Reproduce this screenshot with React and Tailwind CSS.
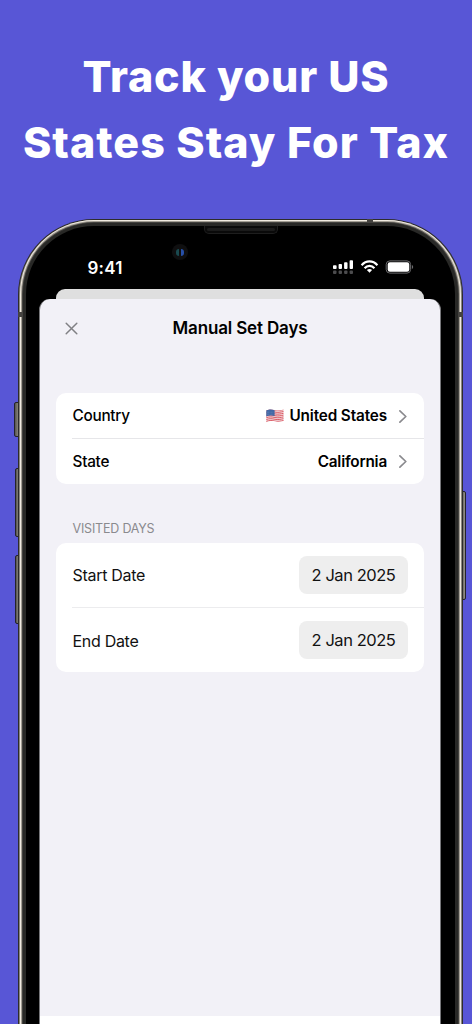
import React from "react";

const locationRows = [
  { label: "Country", value: "United States", flag: true, valueClass: "tracking-[-0.13px]" },
  { label: "State", value: "California", flag: false, valueClass: "tracking-[-0.2px]" },
];

const dateRows = [
  { label: "Start Date", value: "2 Jan 2025" },
  { label: "End Date", value: "2 Jan 2025" },
];

function Flag() {
  return (
    <svg className="w-[18px] h-[14px] mr-[5px] -mt-[2px]" viewBox="0 0 18 14">
      <defs>
        <clipPath id="flag">
          <path d="M0.3 1.6 C4 -0.2 6 0.6 9 1.3 S14 1.4 17.5 0.5 V12 C14 13.2 12 12.8 9 12.2 S4 11.8 0.3 13.2 Z" />
        </clipPath>
      </defs>
      <g clipPath="url(#flag)">
        <rect width="18" height="14" fill="#f2dfe2" />
        {[0.9, 2.7, 4.5, 6.3, 8.1, 9.9, 11.7].map((y) => (
          <path
            key={y}
            d={`M0 ${y + 0.7} C4 ${y - 0.7} 6 ${y - 0.2} 9 ${y + 0.4} S14 ${y + 0.5} 18 ${y - 0.3}`}
            fill="none"
            stroke="#dc5c66"
            strokeWidth="1"
          />
        ))}
        <path d="M0 0 H8.6 V7 C6 6.3 4 6.2 0 7.6 Z" fill="#4167a5" />
        <path d="M1 3.2 H8 M1 5.2 H8" stroke="#8ba4ca" strokeWidth="0.5" strokeDasharray="0.6 0.8" />
      </g>
    </svg>
  );
}

function Chevron() {
  return (
    <svg className="w-2 h-[13px] ml-3 -mt-[1px]" viewBox="0 0 8 13" fill="none">
      <path d="M0.9 0.9 L6.8 6.5 L0.9 12.1" stroke="#8a8a8e" strokeWidth="1.7" strokeLinecap="round" strokeLinejoin="round" />
    </svg>
  );
}

function StatusIcons() {
  return (
    <svg className="w-[84px] h-[18px]" viewBox="0 0 84 18">
      <g fill="#fff">
        <rect x="1" y="6.2" width="3.6" height="3.8" rx="0.9" />
        <rect x="6.6" y="4.9" width="3.4" height="5.1" rx="0.9" />
        <rect x="12.1" y="3.2" width="3.4" height="6.8" rx="0.9" />
        <rect x="17.6" y="1.2" width="3.4" height="8.8" rx="0.9" />
      </g>
      <g fill="#4c4c4e">
        <rect x="1" y="11.6" width="3.5" height="3.4" rx="1" />
        <rect x="6.6" y="11.6" width="3.4" height="3.4" rx="1" />
        <rect x="12.1" y="11.6" width="3.4" height="3.4" rx="1" />
        <rect x="17.6" y="11.6" width="3.4" height="3.4" rx="1" />
      </g>
      <g fill="none" stroke="#fff" strokeWidth="2.2">
        <path d="M29.6 6.2 C34.1 1.2 40.9 1.2 45.4 6.2" />
        <path d="M32.6 9.2 C35.3 6.1 39.7 6.1 42.4 9.2" />
      </g>
      <path d="M37.5 13.8 L34.9 11.1 C36.3 9.5 38.7 9.5 40.1 11.1 Z" fill="#fff" />
      <rect x="54.2" y="1.9" width="24.4" height="12.2" rx="3.6" fill="none" stroke="#6b6b6d" strokeWidth="1" />
      <rect x="55.7" y="3.2" width="21.6" height="9.6" rx="2.2" fill="#fff" />
      <path d="M79.9 6 C81.6 6.6 81.6 9.4 79.9 10 Z" fill="#6b6b6d" />
    </svg>
  );
}

function Sheet() {
  return (
    <div className="ml-[13px] w-[402px]">
      <div className="mx-[17px] h-[10px] bg-[#dfdfdf] rounded-t-[9px]" />
      <div className="h-[717px] bg-[#f2f1f7] rounded-t-[11px] px-4 border-x border-[#77777a]">
        <div className="relative flex items-center justify-center h-[58px] mb-[36px] pt-[2px]">
          <svg className="absolute left-[9px] top-[23px] w-[13px] h-[13px]" viewBox="0 0 13 13">
            <path d="M1.2 1.2 L11.8 11.8 M11.8 1.2 L1.2 11.8" stroke="#808084" strokeWidth="1.5" strokeLinecap="round" />
          </svg>
          <h2 className="text-[17px] font-semibold tracking-[-0.15px] text-black">Manual Set Days</h2>
        </div>

        <div className="bg-white rounded-[10px] pl-4">
          {locationRows.map((row, i) => (
            <div
              key={row.label}
              className={`flex items-center h-[45.3px] pt-[2px] pr-[17px] text-[15.3px] text-black ${i > 0 ? "border-t border-[#e6e6e9]" : ""}`}
            >
              <span className="flex-1 font-medium pl-[0.5px] tracking-[-0.25px]">{row.label}</span>
              {row.flag && <Flag />}
              <span className={`font-semibold ${row.valueClass}`}>{row.value}</span>
              <Chevron />
            </div>
          ))}
        </div>

        <div className="h-[59px] pt-[36px] pl-[16.5px] text-[12.5px] leading-[18px] tracking-[-0.2px] text-[#8a8a8e]">VISITED DAYS</div>

        <div className="bg-white rounded-[10px] pl-4">
          {dateRows.map((row, i) => (
            <div
              key={row.label}
              className={`flex items-center justify-between h-[64.7px] pr-4 text-[16px] text-[#111] ${i > 0 ? "border-t-[1.5px] border-[#ececee]" : ""}`}
            >
              <span className="tracking-[-0.3px] pl-[0.5px] pt-[1px]">{row.label}</span>
              <span className="flex items-center justify-center w-[109px] h-[38px] pt-[1px] rounded-lg bg-[#eeeeee] text-[16.5px] tracking-[-0.45px]">
                {row.value}
              </span>
            </div>
          ))}
        </div>
      </div>
      <div className="h-5 bg-white border-x border-[#77777a]" />
    </div>
  );
}

function SideButton({ className }) {
  return <div className={`absolute border border-[#24232a] bg-gradient-to-r from-[#57554f] to-[#97948c] ${className}`} />;
}

function Phone() {
  return (
    <div className="relative w-[445px] ml-[18px] mt-[44px]">
      <SideButton className="-left-[4px] top-[183px] w-[6px] h-[35px] rounded-l-[2px]" />
      <SideButton className="-left-[3px] top-[249px] w-[5px] h-[69px] rounded-l-[2px]" />
      <SideButton className="-left-[3px] top-[336px] w-[5px] h-[69px] rounded-l-[2px]" />
      <SideButton className="-right-[3px] top-[272px] w-[5px] h-[109px] rounded-r-[2px]" />

      <div className="relative rounded-t-[76px] bg-[#2d2c2c] px-[1px] pt-[1px]">
        <div className="rounded-t-[75px] bg-[#8a867e] px-[1px]">
          <div className="rounded-t-[74px] bg-[#f0eae0] px-[1px] pt-[1px]">
            <div className="rounded-t-[73px] bg-[#a39e94] px-[1px] pt-[1px]">
              <div className="rounded-t-[72px] bg-[#42413e] px-[1px] pt-[1px]">
                <div className="rounded-t-[71px] bg-[#282826] px-[3px] pt-[3px]">
                  <div className="rounded-t-[68px] bg-black h-[830px]">
                    <div className="relative flex justify-between items-start h-[63px] pl-[61.5px] pr-[39px] pt-[32px]">
                      <span className="text-[17px] leading-[20px] font-semibold text-white tracking-[0.2px]">9:41</span>
                      <div className="pt-[1px]">
                        <StatusIcons />
                      </div>
                      <div className="absolute left-[178px] top-0 w-[74px] h-[8px] rounded-b-[5px] border border-t-0 border-[#1e1e1e] bg-[#0a0a0a] px-[2px] pt-[2px]">
                        <div className="h-[3px] rounded-full bg-[#1b1b1b]" />
                      </div>
                      <div className="absolute left-[146px] top-[18px] w-4 h-4 rounded-full bg-[#0f0f10] flex items-center justify-center gap-[2px]">
                        <div className="w-[3px] h-[7px] rounded-l-full bg-[#1a4a50]" />
                        <div className="w-[3px] h-[7px] rounded-r-full bg-[#2750a8]" />
                      </div>
                    </div>
                    <Sheet />
                  </div>
                </div>
              </div>
            </div>
          </div>
        </div>
        <div className="absolute left-0 top-[93px] w-[5px] h-[5px] bg-[#454340]" />
        <div className="absolute right-0 top-[93px] w-[5px] h-[5px] bg-[#454340]" />
        <div className="absolute left-[349px] top-0 w-[6px] h-[4px] bg-[#454340]" />
      </div>
    </div>
  );
}

function App() {
  return (
    <div className="w-[472px] h-[1024px] overflow-hidden bg-[#5856d6] font-['Inter',sans-serif]">
      <h1 className="pt-[43px] text-center text-white font-extrabold text-[43px] leading-[66px] whitespace-nowrap">
        <span className="block tracking-[0.8px]">Track your US</span>
        <span className="block tracking-[1.02px]">States Stay For Tax</span>
      </h1>
      <Phone />
    </div>
  );
}

export default App;
